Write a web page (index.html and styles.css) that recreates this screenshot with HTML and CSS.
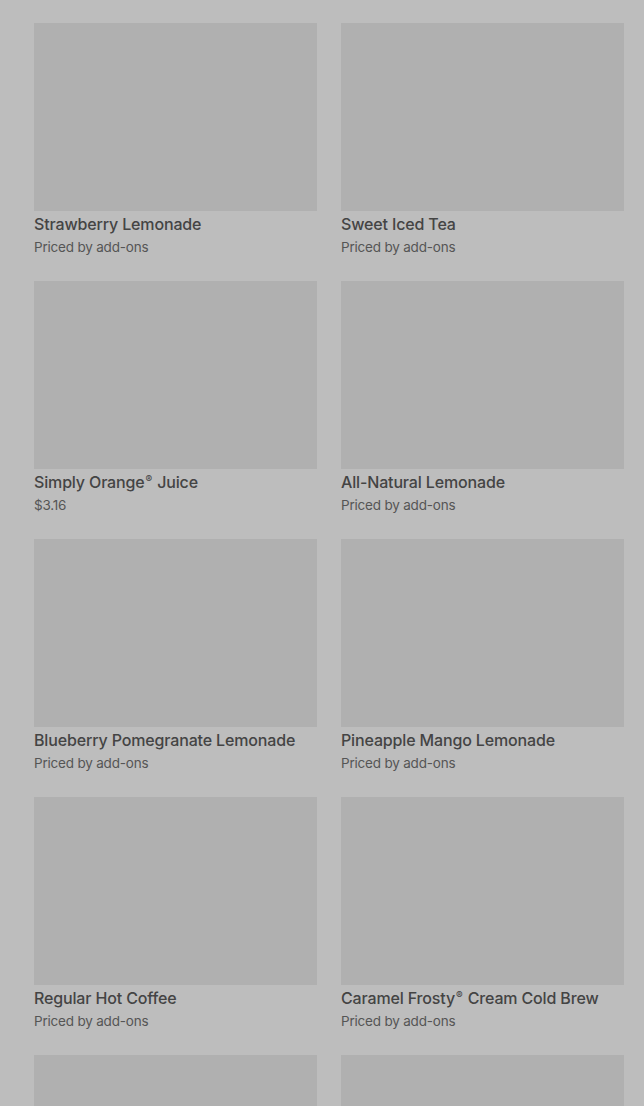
FILE: index.html
```html
<!DOCTYPE html>
<html>
<head>
<meta charset="utf-8">
<link rel="stylesheet" href="styles.css">
</head>
<body>
<div class="grid">
  <div class="card"><div class="thumb"></div><div class="title">Strawberry Lemonade</div><div class="price">Priced by add-ons</div></div>
  <div class="card"><div class="thumb"></div><div class="title">Sweet Iced Tea</div><div class="price">Priced by add-ons</div></div>
  <div class="card"><div class="thumb"></div><div class="title">Simply Orange<span class="reg">®</span> Juice</div><div class="price">$3.16</div></div>
  <div class="card"><div class="thumb"></div><div class="title">All-Natural Lemonade</div><div class="price">Priced by add-ons</div></div>
  <div class="card"><div class="thumb"></div><div class="title">Blueberry Pomegranate Lemonade</div><div class="price">Priced by add-ons</div></div>
  <div class="card"><div class="thumb"></div><div class="title">Pineapple Mango Lemonade</div><div class="price">Priced by add-ons</div></div>
  <div class="card"><div class="thumb"></div><div class="title">Regular Hot Coffee</div><div class="price">Priced by add-ons</div></div>
  <div class="card"><div class="thumb"></div><div class="title">Caramel Frosty<span class="reg">®</span> Cream Cold Brew</div><div class="price">Priced by add-ons</div></div>
  <div class="card"><div class="thumb"></div><div class="title">&nbsp;</div><div class="price">&nbsp;</div></div>
  <div class="card"><div class="thumb"></div><div class="title">&nbsp;</div><div class="price">&nbsp;</div></div>
</div>
</body>
</html>
```

FILE: styles.css
```css
html, body {
  margin: 0;
  padding: 0;
  background: #bdbdbd;
  overflow: hidden;
}
body {
  font-family: "Inter", "Roboto", sans-serif;
  height: 1106px;
}
.grid {
  display: grid;
  grid-template-columns: 283px 283px;
  column-gap: 24px;
  row-gap: 24px;
  padding: 23px 20px 0 34px;
}
.card {
  display: flex;
  flex-direction: column;
}
.thumb {
  height: 188px;
  background: #b0b0b0;
}
.title {
  margin-top: 1px;
  font-size: 16px;
  line-height: 24px;
  font-weight: 500;
  color: #444444;
  letter-spacing: -0.15px;
  white-space: nowrap;
}
.reg {
  font-size: 10px;
  vertical-align: 5px;
  line-height: 0;
  margin: 0 1px;
}
.price {
  margin-top: 1px;
  font-size: 13.5px;
  line-height: 20px;
  color: #555555;
  letter-spacing: -0.2px;
}
```
